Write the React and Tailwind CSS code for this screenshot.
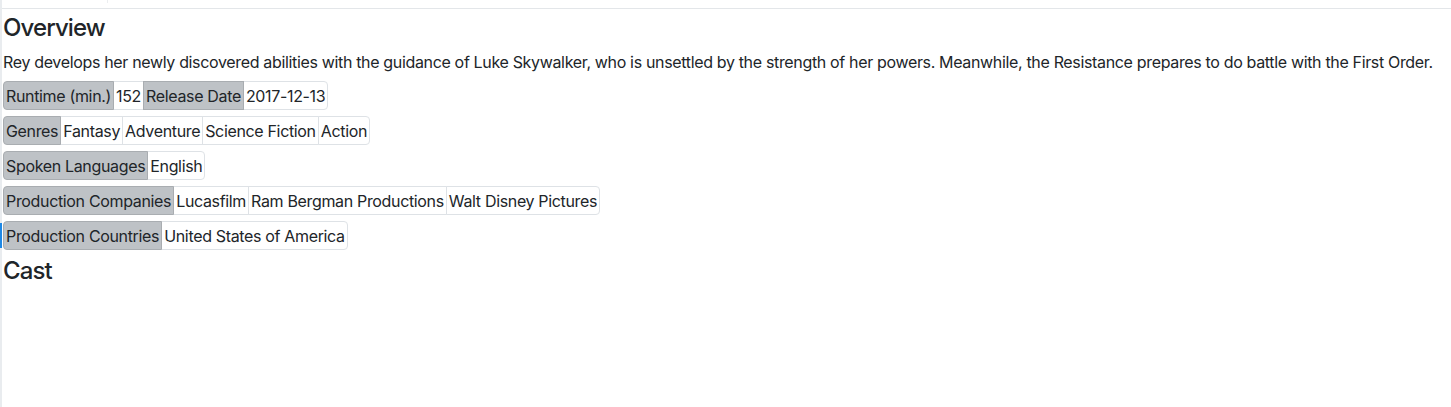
const movie = {
  overview:
    "Rey develops her newly discovered abilities with the guidance of Luke Skywalker, who is unsettled by the strength of her powers. Meanwhile, the Resistance prepares to do battle with the First Order.",
  rows: [
    [
      { label: "Runtime (min.)", values: ["152"] },
      { label: "Release Date", values: ["2017-12-13"] },
    ],
    [{ label: "Genres", values: ["Fantasy", "Adventure", "Science Fiction", "Action"] }],
    [{ label: "Spoken Languages", values: ["English"] }],
    [{ label: "Production Companies", values: ["Lucasfilm", "Ram Bergman Productions", "Walt Disney Pictures"] }],
    [{ label: "Production Countries", values: ["United States of America"] }],
  ],
};

function InfoRow({ groups }) {
  const cells = [];
  groups.forEach((g) => {
    cells.push({ text: g.label, label: true });
    g.values.forEach((v) => cells.push({ text: v, label: false }));
  });

  return (
    <div className="flex">
      {cells.map((cell, i) => (
        <span
          key={i}
          className={`flex h-[29px] items-center whitespace-nowrap border px-[2px] leading-6 ${
            i > 0 ? "-ml-px" : ""
          } ${i === 0 ? "rounded-l-[4px]" : ""} ${i === cells.length - 1 ? "rounded-r-[4px]" : ""} ${
            cell.label ? "relative z-10 border-[#a9adb1] bg-[#bec2c6]" : "border-[#dee2e6] bg-white"
          }`}>
          {cell.text}
        </span>
      ))}
    </div>
  );
}

export default function App() {
  return (
    <div
      className="relative min-h-[407px] border-l-2 border-[#e9ecef] bg-white text-[16px] tracking-[-0.34px] text-[#212529]"
      style={{ fontFamily: "Inter, 'Noto Sans', sans-serif" }}>
      {/* top strip */}
      <div className="relative h-[9px] border-b border-[#e3e6e9]">
        <div className="absolute left-[105px] top-0 h-[3px] w-px bg-[#eceef0]" />
      </div>

      <div className="pl-px">
        {/* Overview */}
        <h3 className="mt-[4px] mb-[8px] text-[24px] font-medium leading-[29px] tracking-[-0.9px]">Overview</h3>
        <p className="mb-[7px] leading-6">{movie.overview}</p>

        {/* Details */}
        <div className="flex flex-col gap-[6px]">
          {movie.rows.map((groups, i) => (
            <InfoRow key={i} groups={groups} />
          ))}
        </div>

        {/* Cast */}
        <h3 className="mt-[6px] text-[24px] font-medium leading-[29px] tracking-[-0.9px]">Cast</h3>
      </div>

      {/* focus marker on left edge */}
      <div className="absolute -left-[2px] top-[223px] h-[25px] w-[2px] bg-[#1e88e5]" />
    </div>
  );
}
